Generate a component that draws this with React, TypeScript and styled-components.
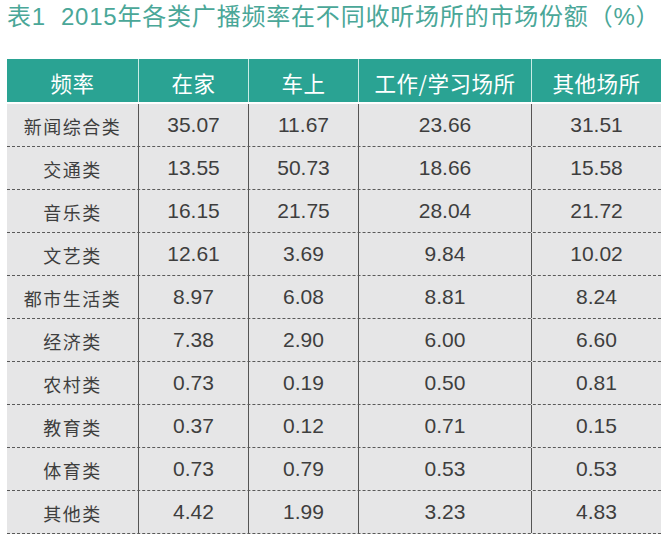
import React from "react";
import styled, { createGlobalStyle } from "styled-components";

const GlobalStyle = createGlobalStyle`
  html, body {
    margin: 0;
    padding: 0;
    background: #ffffff;
  }
  body {
    font-family: "Liberation Sans", "Noto Sans CJK SC", sans-serif;
  }
`;

const Page = styled.div`
  width: 665px;
  height: 540px;
  box-sizing: border-box;
  padding: 2px 4px 0 7px;
  display: flex;
  flex-direction: column;
  overflow: hidden;
`;

const Title = styled.h1`
  margin: 0;
  font-family: "Liberation Sans", "Noto Sans CJK SC", sans-serif;
  font-weight: 400;
  font-size: 24px;
  line-height: 30px;
  letter-spacing: 0.8px;
  color: #4aa798;
  white-space: nowrap;
`;

const Table = styled.div`
  margin-top: 27px;
  width: 654px;
  display: flex;
  flex-direction: column;
`;

const COLS = "131px 110px 110px 173px 130px";

const HeaderRow = styled.div`
  display: grid;
  grid-template-columns: ${COLS};
  height: 43px;
  background: #2aa393;
  border-bottom: 2px solid #ffffff;
`;

const HeaderCell = styled.div<{ $first?: boolean }>`
  box-sizing: border-box;
  display: flex;
  align-items: center;
  justify-content: center;
  padding-top: 4px;
  border-left: ${(p) => (p.$first ? "none" : "1px solid #c9ece6")};
  color: #ffffff;
  font-family: "Noto Sans CJK SC", sans-serif;
  font-size: 21.5px;
  letter-spacing: 0.5px;
  white-space: nowrap;
`;

const BodyRow = styled.div`
  display: grid;
  grid-template-columns: ${COLS};
  height: 43px;
  box-sizing: border-box;
  background: #e6e6e7;
  border-bottom: 1px dashed #5a5a5a;
`;

const BodyCell = styled.div<{ $first?: boolean }>`
  box-sizing: border-box;
  display: flex;
  align-items: center;
  justify-content: center;
  border-left: ${(p) => (p.$first ? "none" : "1px solid #555555")};
  color: #3e3e3e;
  white-space: nowrap;
  font-family: ${(p) =>
    p.$first
      ? `"Noto Sans CJK SC", sans-serif`
      : `"Liberation Sans", "Noto Sans CJK SC", sans-serif`};
  font-size: ${(p) => (p.$first ? "18px" : "21px")};
  letter-spacing: ${(p) => (p.$first ? "1.5px" : "0")};
  padding-top: ${(p) => (p.$first ? "1px" : "0")};
`;

const headers = ["频率", "在家", "车上", "工作/学习场所", "其他场所"];

const rows: [string, string, string, string, string][] = [
  ["新闻综合类", "35.07", "11.67", "23.66", "31.51"],
  ["交通类", "13.55", "50.73", "18.66", "15.58"],
  ["音乐类", "16.15", "21.75", "28.04", "21.72"],
  ["文艺类", "12.61", "3.69", "9.84", "10.02"],
  ["都市生活类", "8.97", "6.08", "8.81", "8.24"],
  ["经济类", "7.38", "2.90", "6.00", "6.60"],
  ["农村类", "0.73", "0.19", "0.50", "0.81"],
  ["教育类", "0.37", "0.12", "0.71", "0.15"],
  ["体育类", "0.73", "0.79", "0.53", "0.53"],
  ["其他类", "4.42", "1.99", "3.23", "4.83"],
];

export default function App() {
  return (
    <>
      <GlobalStyle />
      <Page>
        <Title>表1&nbsp;&nbsp;2015年各类广播频率在不同收听场所的市场份额（%）</Title>
        <Table>
          <HeaderRow>
            {headers.map((h, i) => (
              <HeaderCell key={h} $first={i === 0}>
                {h}
              </HeaderCell>
            ))}
          </HeaderRow>
          {rows.map((r) => (
            <BodyRow key={r[0]}>
              {r.map((c, i) => (
                <BodyCell key={i} $first={i === 0}>
                  {c}
                </BodyCell>
              ))}
            </BodyRow>
          ))}
        </Table>
      </Page>
    </>
  );
}
